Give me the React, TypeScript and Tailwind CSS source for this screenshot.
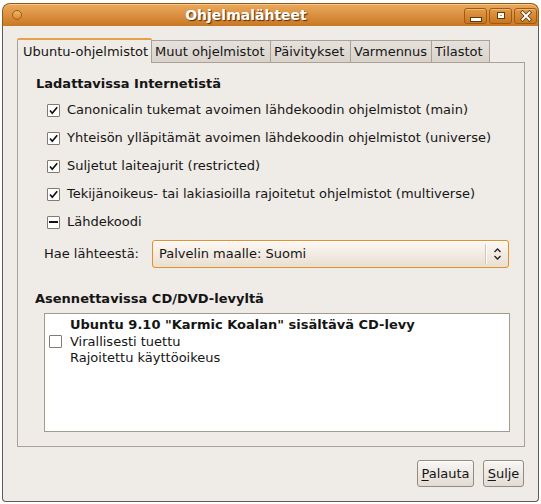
import React from "react";

const font = { fontFamily: '"DejaVu Sans", "Liberation Sans", sans-serif' };

const CheckBox = ({ state }: { state: "on" | "off" | "mixed" }) => (
  <span className="flex w-[13px] h-[13px] shrink-0 items-center justify-center border border-[#857a6d] bg-white rounded-[1px]">
    {state === "on" && (
      <svg width="11" height="11" viewBox="0 0 11 11">
        <path d="M2 5.5 L4.3 8.2 L9.2 2.3" fill="none" stroke="#111" strokeWidth="1.7" />
      </svg>
    )}
    {state === "mixed" && <span className="block w-[9px] h-[2px] bg-[#111]" />}
  </span>
);

const Row = ({ state, label }: { state: "on" | "off" | "mixed"; label: string }) => (
  <div className="flex h-[28px] items-center gap-[7px] pl-[29px]">
    <CheckBox state={state} />
    <span>{label}</span>
  </div>
);

const WinButton = ({ children }: { children: React.ReactNode }) => (
  <div className="flex w-[23px] h-[16px] items-center justify-center rounded-[3px] border border-[#9c5a16] bg-linear-to-b from-[#e39a45] to-[#c9761e] shadow-[inset_0_1px_0_#f0b873]">
    {children}
  </div>
);

const Button = ({ first, rest, w }: { first: string; rest: string; w: string }) => (
  <div
    className={`flex h-[27px] ${w} items-center justify-center rounded-[3px] border border-[#968a7c] bg-linear-to-b from-[#f8f6f3] to-[#e2dcd5] shadow-[inset_0_1px_0_#fff]`}
  >
    <span>
      <span className="underline underline-offset-2">{first}</span>
      {rest}
    </span>
  </div>
);

export default function App() {
  const tabs = ["Muut ohjelmistot", "Päivitykset", "Varmennus", "Tilastot"];
  const widths = ["w-[119px]", "w-[80px]", "w-[81px]", "w-[58px]"];

  return (
    <div className="w-[541px] h-[504px] bg-white text-[13px] text-[#151515] leading-[16px]" style={font}>
      <div className="ml-[2px] pt-[3px] w-[537px] h-[502px] flex flex-col">
        {/* title bar */}
        <div className="relative flex h-[23px] items-center rounded-t-[8px] border border-b-0 border-[#8d5a1c] bg-linear-to-b from-[#eba95b] to-[#c97820] shadow-[inset_0_1px_0_#f6c88e]">
          <span className="ml-[9px] w-[10px] h-[10px] rounded-full border border-[#9a5d18] bg-linear-to-b from-[#f0b76a] to-[#d68a30]" />
          <div className="flex-1 text-center pl-[6px] text-[14px] font-bold text-white [text-shadow:1px_1px_1px_#4f2f08]">
            Ohjelmalähteet
          </div>
          <div className="flex gap-[2px] mr-[1px] mt-[1px]">
            <WinButton>
              <span className="mt-[6px] block w-[10px] h-[3px] bg-white border border-[#5d3a10] box-content -mb-[1px]" />
            </WinButton>
            <WinButton>
              <span className="block w-[6px] h-[5px] border-2 border-white outline outline-1 outline-[#5d3a10]" />
            </WinButton>
            <WinButton>
              <svg width="12" height="12" viewBox="0 0 12 12">
                <path d="M2.5 2.5 L9.5 9.5 M9.5 2.5 L2.5 9.5" stroke="#5d3a10" strokeWidth="3.6" strokeLinecap="square" />
                <path d="M2.5 2.5 L9.5 9.5 M9.5 2.5 L2.5 9.5" stroke="#fff" strokeWidth="2" strokeLinecap="square" />
              </svg>
            </WinButton>
          </div>
        </div>

        {/* body */}
        <div className="flex-1 flex flex-col bg-[#efebe7] border-x border-b border-[#5e5a55] rounded-b-[4px] pt-[12px] pl-[14px] pr-[13px]">
          {/* tabs */}
          <div className="flex h-[24px] items-end whitespace-nowrap">
            <div className="relative z-10 -mb-[1px] flex h-[25px] w-[135px] items-center pl-[5px] rounded-t-[2px] border border-b-0 border-[#a9a196] border-t-2 border-t-[#e9a04c] bg-[#efebe7]">
              Ubuntu-ohjelmistot
            </div>
            {tabs.map((t, i) => (
              <div
                key={t}
                className={`flex h-[22px] ${widths[i]} items-center pl-[3px] pt-[1px] border border-l-0 border-b-0 border-[#a9a196] bg-linear-to-b from-[#e6e1db] to-[#d9d3cc]`}
              >
                {t}
              </div>
            ))}
          </div>

          {/* panel */}
          <div className="flex flex-col w-[508px] h-[385px] border border-[#a9a196]">
            <div className="mt-[13px] pl-[18px] font-bold">Ladattavissa Internetistä</div>
            <div className="mt-[4px]">
              <Row state="on" label="Canonicalin tukemat avoimen lähdekoodin ohjelmistot (main)" />
              <Row state="on" label="Yhteisön ylläpitämät avoimen lähdekoodin ohjelmistot (universe)" />
              <Row state="on" label="Suljetut laiteajurit (restricted)" />
              <Row state="on" label="Tekijänoikeus- tai lakiasioilla rajoitetut ohjelmistot (multiverse)" />
              <Row state="mixed" label="Lähdekoodi" />
            </div>
            <div className="mt-[4px] flex items-center pl-[26px]">
              <span className="w-[108px]">Hae lähteestä:</span>
              <div className="flex h-[28px] w-[357px] items-center rounded-[3px] border border-[#e1902c] bg-linear-to-b from-[#fcf8f3] to-[#e9dfd2] shadow-[inset_0_1px_0_#fff]">
                <span className="flex-1 pl-[6px]">Palvelin maalle: Suomi</span>
                <span className="h-[20px] w-px bg-[#cfc6bb] border-r border-white box-content" />
                <svg className="mx-[6px]" width="9" height="14" viewBox="0 0 9 14">
                  <path d="M1.5 5 L4.5 2 L7.5 5 M1.5 9 L4.5 12 L7.5 9" fill="none" stroke="#222" strokeWidth="1.3" />
                </svg>
              </div>
            </div>
            <div className="mt-[23px] pl-[17px] font-bold">Asennettavissa CD/DVD-levyltä</div>
            <div className="mt-[6px] ml-[26px] h-[119px] w-[466px] border border-[#a39b90] bg-white">
              <div className="flex items-center pt-[3px]">
                <span className="ml-[4px] mr-[8px]">
                  <CheckBox state="off" />
                </span>
                <div className="leading-[16.5px]">
                  <div className="font-bold">Ubuntu 9.10 "Karmic Koalan" sisältävä CD-levy</div>
                  <div>Virallisesti tuettu</div>
                  <div>Rajoitettu käyttöoikeus</div>
                </div>
              </div>
            </div>
          </div>

          {/* buttons */}
          <div className="mt-[13px] flex justify-end gap-[9px] pr-[1px]">
            <Button first="P" rest="alauta" w="w-[57px]" />
            <Button first="S" rest="ulje" w="w-[41px]" />
          </div>
        </div>
      </div>
    </div>
  );
}
